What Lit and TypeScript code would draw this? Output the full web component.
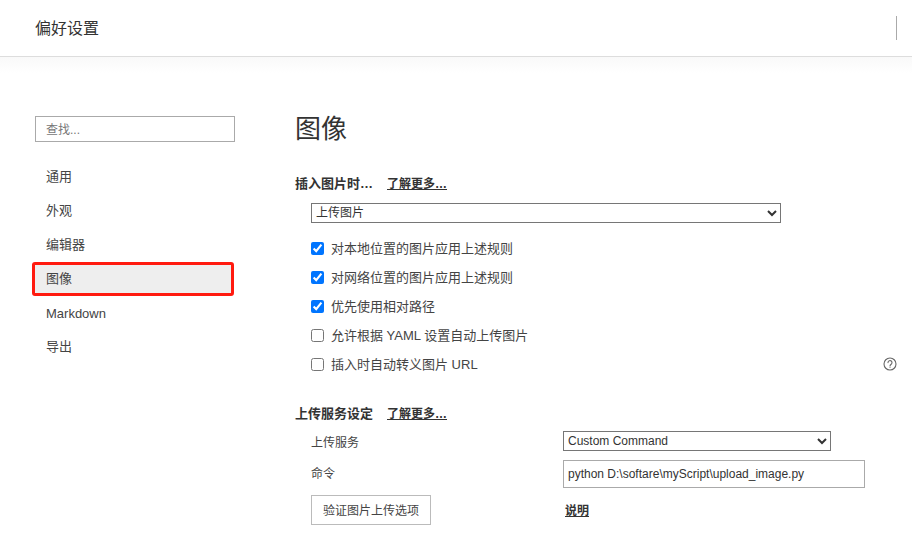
import { LitElement, html, css } from "lit";
import { customElement } from "lit/decorators.js";

@customElement("app-root")
export class AppRoot extends LitElement {
  static styles = css`
    :host {
      display: block;
      width: 912px;
      height: 544px;
      overflow: hidden;
      background: #fff;
      color: #333;
      font-family: "Liberation Sans", "Noto Sans CJK SC", sans-serif;
      font-size: 13px;
    }
    * { box-sizing: border-box; }
    .header {
      height: 57px;
      border-bottom: 1px solid #ddd;
      padding: 0 15px 0 35px;
      display: flex;
      align-items: center;
      justify-content: space-between;
    }
    .title { font-size: 16px; color: #333; line-height: 58px; height: 56px; }
    .divider { width: 1px; height: 24px; background: #aaa; }
    .main {
      height: 487px;
      padding-top: 59px;
      background: linear-gradient(#f9f9f9 0, #fff 16px);
      display: flex;
    }
    .side { width: 292px; padding-left: 32px; flex: none; }
    .search {
      display: block;
      margin-left: 3px;
      width: 200px;
      height: 26px;
      border: 1px solid #aaa;
      padding: 1px 10px 0;
      font: inherit;
      font-size: 12px;
      color: #333;
      outline: none;
      background: #fff;
    }
    .search::placeholder { color: #777; opacity: 1; }
    .nav { margin-top: 18px; width: 202px; }
    .item {
      height: 34px;
      line-height: 34px;
      padding-left: 14px;
      color: #444;
    }
    .item.latin { line-height: 36px; }
    .item.active {
      background: #eee;
      border: 3px solid #ff1a0f;
      border-radius: 3px;
      line-height: 28px;
      padding-left: 11px;
    }
    .content { flex: 1; padding: 0 15px 0 3px; position: relative; }
    h1 {
      margin: 0;
      font-size: 26px;
      font-weight: 400;
      line-height: 26px;
      height: 26px;
    }
    .section { display: flex; align-items: baseline; gap: 14px; font-weight: 700; line-height: 18px; }
    .section.first { margin-top: 33px; }
    .section.second { margin-top: 26px; }
    .section a { color: #333; font-size: 12px; text-decoration: underline; }
    .indent { margin-left: 16px; }
    select {
      display: block;
      font-family: inherit;
      font-size: 12px;
      color: #333;
      background-color: #fff;
      border: 1px solid #767676;
      border-radius: 0;
      outline: none;
      height: 20px;
      padding: 0;
    }
    .sel-top { width: 470px; margin-top: 10px; margin-bottom: 11px; }
    .check {
      display: flex;
      align-items: center;
      height: 29px;
      color: #444;
    }
    .check input {
      width: 13px;
      height: 13px;
      margin: 0 7px 0 0;
      accent-color: #0075ff;
      flex: none;
    }
    .check span { padding-bottom: 2px; }
    .help {
      position: absolute;
      right: 15px;
      top: 241px;
      width: 14px;
      height: 14px;
      display: block;
    }
    .grid {
      margin: 1px 0 0 16px;
      display: grid;
      grid-template-columns: 252px 1fr;
      align-items: center;
      color: #444;
      font-size: 12px;
    }
    .grid .r1 { height: 34px; display: flex; align-items: center; }
    .grid .r2 { height: 32px; display: flex; align-items: center; }
    .grid .r2.label { padding-bottom: 3px; }
    .grid .r3 { height: 39px; display: flex; align-items: center; }
    .sel-svc { width: 268px; }
    .cmd {
      width: 302px;
      height: 28px;
      border: 1px solid #aaa;
      padding: 0 4px;
      font: inherit;
      color: #333;
      outline: none;
      background: #fff;
    }
    .btn {
      width: 120px;
      height: 30px;
      border: 1px solid #bbb;
      background: #fff;
      font: inherit;
      color: #444;
      padding: 0;
    }
    .doc { margin-left: 2px; font-weight: 700; color: #333; text-decoration: underline; }
  `;

  private checks: [string, boolean][] = [
    ["对本地位置的图片应用上述规则", true],
    ["对网络位置的图片应用上述规则", true],
    ["优先使用相对路径", true],
    ["允许根据 YAML 设置自动上传图片", false],
    ["插入时自动转义图片 URL", false],
  ];

  render() {
    return html`
      <div class="header">
        <div class="title">偏好设置</div>
        <div class="divider"></div>
      </div>
      <div class="main">
        <div class="side">
          <input class="search" placeholder="查找..." />
          <div class="nav">
            <div class="item">通用</div>
            <div class="item">外观</div>
            <div class="item">编辑器</div>
            <div class="item active">图像</div>
            <div class="item latin">Markdown</div>
            <div class="item">导出</div>
          </div>
        </div>
        <div class="content">
          <h1>图像</h1>
          <div class="section first"><span>插入图片时…</span><a>了解更多…</a></div>
          <select class="indent sel-top"><option>上传图片</option></select>
          <div class="indent">
            ${this.checks.map(
              ([label, on]) => html`
                <label class="check"><input type="checkbox" .checked=${on} /><span>${label}</span></label>
              `
            )}
          </div>
          <svg class="help" viewBox="0 0 14 14" fill="none" stroke="#666" stroke-width="1.1">
            <circle cx="7" cy="7" r="6" />
            <path d="M5 5.6a2 2 0 1 1 3.2 1.6c-.8.6-1.2 1-1.2 1.8" stroke-linecap="round" />
            <circle cx="7" cy="10.6" r=".5" fill="#666" stroke="none" />
          </svg>
          <div class="section second"><span>上传服务设定</span><a>了解更多…</a></div>
          <div class="grid">
            <div class="r1">上传服务</div>
            <div class="r1"><select class="sel-svc"><option>Custom Command</option></select></div>
            <div class="r2 label">命令</div>
            <div class="r2"><input class="cmd" .value=${"python D:\\softare\\myScript\\upload_image.py"} /></div>
            <div class="r3"><button class="btn">验证图片上传选项</button></div>
            <div class="r3"><a class="doc">说明</a></div>
          </div>
        </div>
      </div>
    `;
  }
}
